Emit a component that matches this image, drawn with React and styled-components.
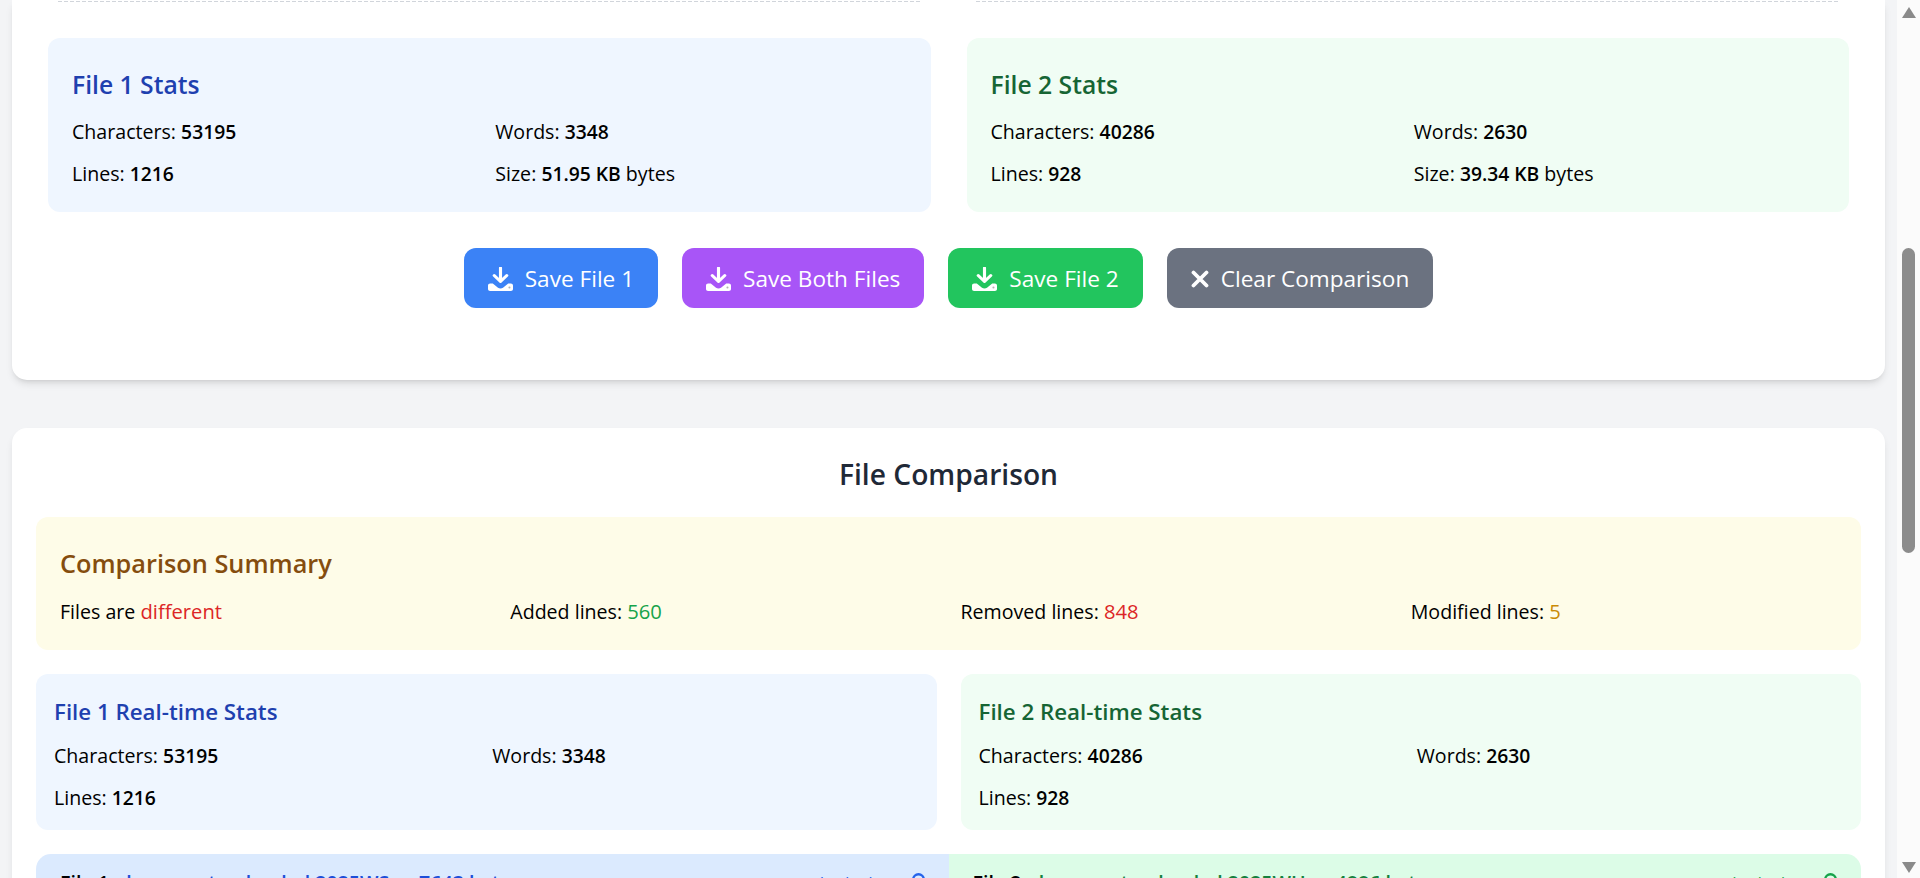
import React from "react";
import styled, { createGlobalStyle } from "styled-components";

const GlobalStyle = createGlobalStyle`
  * { box-sizing: border-box; }
  html, body { margin: 0; height: 100%; overflow: hidden; }
  body { background: #f3f4f6; font-family: "Open Sans", "Noto Sans", sans-serif; color: #000; }
  #root { height: 100%; }
`;

// ---------- Page ----------
const Shell = styled.div`
  display: flex; height: 878px; overflow: hidden;
`;
const Main = styled.main`
  flex: 1; min-width: 0; padding: 0 12px;
  display: flex; flex-direction: column; gap: 48px;
`;
const ScrollTrack = styled.div`
  width: 23px; flex-shrink: 0; background: #fbfbfb;
  display: flex; flex-direction: column; align-items: center;
  padding: 7px 0 5px;
`;
const ScrollArrow = styled.div`
  width: 0; height: 0;
  border-left: 7px solid transparent; border-right: 7px solid transparent;
  ${(p) => p.$down ? "border-top: 11px solid #8a8a8a;" : "border-bottom: 11px solid #8a8a8a;"}
`;
const ScrollThumb = styled.div`
  width: 13px; height: 305px; border-radius: 7px; background: #8c8c8c;
  margin: 230px 0 auto;
`;

// ---------- Cards ----------
const UploadCard = styled.section`
  background: #fff; border-radius: 0 0 15px 15px; height: 380px; flex-shrink: 0;
  box-shadow: 0 5px 8px -2px rgba(0,0,0,0.12), 0 3px 5px -3px rgba(0,0,0,0.1);
  display: flex; flex-direction: column;
  padding: 0 36px;
`;
const DropRow = styled.div`
  display: grid; grid-template-columns: 1fr 1fr; gap: 55px;
  padding: 1px 10px 0;
`;
const DropEdge = styled.div`
  height: 1px;
  background: repeating-linear-gradient(90deg, #d1d5db 0 4px, transparent 4px 6px);
`;
const StatsRow = styled.div`
  display: grid; grid-template-columns: 1fr 1fr;
  gap: ${(p) => p.$gap}px;
  margin-top: ${(p) => p.$top || 0}px;
`;
const Panel = styled.div`
  background: ${(p) => p.$tone === "blue" ? "#eff6ff" : p.$tone === "green" ? "#f0fdf4" : "#fefce8"};
  border-radius: 12px;
  padding: ${(p) => p.$pad}px ${(p) => p.$pad}px ${(p) => p.$bottom}px;
`;
const PanelTitle = styled.h3`
  margin: 0 0 ${(p) => p.$gap}px; font-weight: 600;
  font-size: ${(p) => p.$size}px; line-height: ${(p) => p.$line}px;
  color: ${(p) => p.$color};
`;
const StatGrid = styled.div`
  display: grid; grid-template-columns: 1fr 1fr; gap: 12px;
`;
const SummaryGrid = styled.div`
  display: grid; grid-template-columns: repeat(4, 1fr); gap: 24px;
`;
const Stat = styled.p`
  margin: 0; font-size: 19.6px; line-height: 30px; color: #000;
  strong {
    font-size: ${(p) => p.$value ? 20.2 : 19.3}px;
    font-weight: ${(p) => p.$value ? 500 : 600};
    color: ${(p) => p.$value || "#000"};
  }
`;
const ButtonRow = styled.div`
  display: flex; justify-content: center; gap: 24px; margin-top: 36px;
`;
const ActionButton = styled.button`
  display: inline-flex; align-items: center; gap: 12px;
  height: 60px; padding: 1px 24px 0; border: none; border-radius: 12px;
  background: ${(p) => p.$bg}; color: #fff;
  font-family: inherit; font-size: 22.6px; white-space: nowrap;
  svg { flex-shrink: 0; }
`;

const CompareCard = styled.section`
  background: #fff; border-radius: 15px; padding: 24px; flex-shrink: 0;
  box-shadow: 0 5px 8px -2px rgba(0,0,0,0.12);
`;
const CompareTitle = styled.h2`
  margin: 0 0 20px; text-align: center; font-weight: 600;
  font-size: 28.2px; line-height: 45px; color: #1f2937;
`;
const Stack = styled.div`
  display: flex; flex-direction: column; gap: 24px;
`;
const DiffHeaders = styled.div`
  display: grid; grid-template-columns: 1fr 1fr;
`;
const DiffHeader = styled.div`
  display: flex; justify-content: space-between; align-items: flex-start;
  padding: 14px 21px 16px 24px; height: 60px;
  background: ${(p) => p.$bg};
  border-radius: ${(p) => p.$left ? "15px 0 0 0" : "0 15px 0 0"};
`;
const FileName = styled.span`
  font-size: 19.6px; line-height: 30px; font-weight: 600; color: #000;
  b { font-weight: 600; color: ${(p) => p.$color}; }
`;
const HeaderTools = styled.span`
  display: flex; align-items: flex-start; gap: 36px;
  font-size: 16px; line-height: 30px;
  color: ${(p) => p.$color};
`;
const LockIcon = styled.svg`
  width: 19px; height: 24px; margin-top: 5px; flex-shrink: 0;
`;

const DownloadIcon = () => (
  <svg width="25" height="24" viewBox="0 0 24 24" preserveAspectRatio="none" aria-hidden="true">
    <path d="M12 1v13M6 8.500l6 6 6-6" fill="none" stroke="#fff" strokeWidth="3" strokeLinecap="round" strokeLinejoin="round" />
    <path d="M2 16.500h2.600l5 4.200c1.400 1.100 3.400 1.100 4.800 0l5-4.200H22c1.100 0 2 .9 2 2v3.500c0 1.100-.9 2-2 2H2c-1.100 0-2-.9-2-2v-3.500c0-1.100.9-2 2-2z" fill="#fff" />
    <circle cx="20.600" cy="20.400" r="1" fill="rgba(0,0,0,.3)" />
  </svg>
);

const ClearIcon = () => (
  <svg width="18" height="18" viewBox="0 0 18 18" aria-hidden="true">
    <path d="M2.500 2.500l13 13M15.500 2.500l-13 13" fill="none" stroke="#fff" strokeWidth="3.800" strokeLinecap="round" />
  </svg>
);

const Lock = ({ color }) => (
  <LockIcon viewBox="0 0 19 24" fill="none" stroke={color} strokeWidth="2.400">
    <path d="M4.200 12V6.500a5.300 5.300 0 0 1 10.600 0V12" />
    <rect x="1" y="11" width="17" height="12" rx="2" fill={color} />
  </LockIcon>
);

export default function App() {
  return (
    <Shell>
      <GlobalStyle />
      <Main>
        <UploadCard>
          <DropRow>
            <DropEdge />
            <DropEdge />
          </DropRow>
          <StatsRow $gap={36} $top={36}>
            <Panel $tone="blue" $pad={24} $bottom={23}>
              <PanelTitle $size={24.7} $line={46} $gap={9} $color="#1e40af">File 1 Stats</PanelTitle>
              <StatGrid>
                <Stat>Characters: <strong>53195</strong></Stat>
                <Stat>Words: <strong>3348</strong></Stat>
                <Stat>Lines: <strong>1216</strong></Stat>
                <Stat>Size: <strong>51.95 KB</strong> bytes</Stat>
              </StatGrid>
            </Panel>
            <Panel $tone="green" $pad={24} $bottom={23}>
              <PanelTitle $size={24.7} $line={46} $gap={9} $color="#166534">File 2 Stats</PanelTitle>
              <StatGrid>
                <Stat>Characters: <strong>40286</strong></Stat>
                <Stat>Words: <strong>2630</strong></Stat>
                <Stat>Lines: <strong>928</strong></Stat>
                <Stat>Size: <strong>39.34 KB</strong> bytes</Stat>
              </StatGrid>
            </Panel>
          </StatsRow>
          <ButtonRow>
            <ActionButton $bg="#3b82f6"><DownloadIcon />Save File 1</ActionButton>
            <ActionButton $bg="#a855f7"><DownloadIcon />Save Both Files</ActionButton>
            <ActionButton $bg="#22c55e"><DownloadIcon />Save File 2</ActionButton>
            <ActionButton $bg="#6b7280"><ClearIcon />Clear Comparison</ActionButton>
          </ButtonRow>
        </UploadCard>

        <CompareCard>
          <CompareTitle>File Comparison</CompareTitle>
          <Stack>
            <Panel $tone="yellow" $pad={24} $bottom={23}>
              <PanelTitle $size={25.3} $line={44} $gap={11} $color="#854d0e">Comparison Summary</PanelTitle>
              <SummaryGrid>
                <Stat $value="#dc2626">Files are <strong>different</strong></Stat>
                <Stat $value="#16a34a">Added lines: <strong>560</strong></Stat>
                <Stat $value="#dc2626">Removed lines: <strong>848</strong></Stat>
                <Stat $value="#ca8a04">Modified lines: <strong>5</strong></Stat>
              </SummaryGrid>
            </Panel>
            <StatsRow $gap={24}>
              <Panel $tone="blue" $pad={18} $bottom={17}>
                <PanelTitle $size={22.3} $line={39} $gap={10} $color="#1e40af">File 1 Real-time Stats</PanelTitle>
                <StatGrid>
                  <Stat>Characters: <strong>53195</strong></Stat>
                  <Stat>Words: <strong>3348</strong></Stat>
                  <Stat>Lines: <strong>1216</strong></Stat>
                </StatGrid>
              </Panel>
              <Panel $tone="green" $pad={18} $bottom={17}>
                <PanelTitle $size={22.3} $line={39} $gap={10} $color="#166534">File 2 Real-time Stats</PanelTitle>
                <StatGrid>
                  <Stat>Characters: <strong>40286</strong></Stat>
                  <Stat>Words: <strong>2630</strong></Stat>
                  <Stat>Lines: <strong>928</strong></Stat>
                </StatGrid>
              </Panel>
            </StatsRow>
            <DiffHeaders>
              <DiffHeader $left $bg="#dbeafe">
                <FileName $color="#1d4ed8">File 1: <b>document uploaded 2025WS — 7643 bytes</b></FileName>
                <HeaderTools $color="#2563eb">Locked<Lock color="#2563eb" /></HeaderTools>
              </DiffHeader>
              <DiffHeader $bg="#dcfce7">
                <FileName $color="#15803d">File 2: <b>document uploaded 2025WH — 4886 bytes</b></FileName>
                <HeaderTools $color="#16a34a">Locked<Lock color="#16a34a" /></HeaderTools>
              </DiffHeader>
            </DiffHeaders>
          </Stack>
        </CompareCard>
      </Main>
      <ScrollTrack>
        <ScrollArrow />
        <ScrollThumb />
        <ScrollArrow $down />
      </ScrollTrack>
    </Shell>
  );
}
